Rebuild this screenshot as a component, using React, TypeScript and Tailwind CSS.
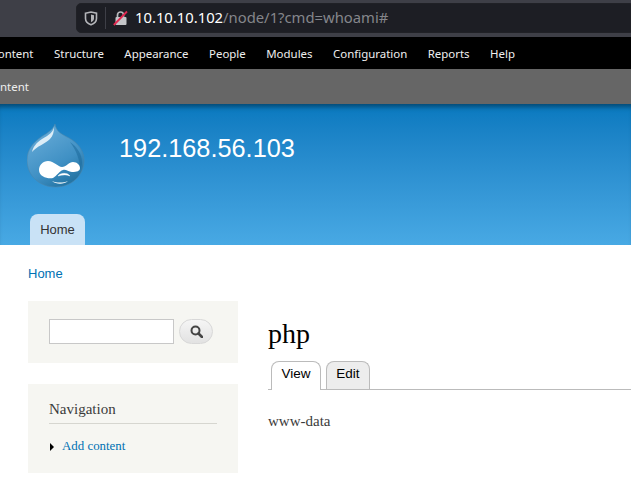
const navItems = ["Content", "Structure", "Appearance", "People", "Modules", "Configuration", "Reports", "Help"]

function ShieldIcon() {
  return (
    <svg width="14" height="15" viewBox="0 0 14 15" fill="none">
      <path d="M1.5 2.2 7 1l5.5 1.2v5.2c0 3-2.4 5.2-5.5 6.4C3.9 12.6 1.5 10.4 1.5 7.4z" stroke="#b4b5b9" strokeWidth="1.6" />
      <path d="M7 3.5 10 4.2v3.2c0 1.7-1.3 3-3 3.8z" fill="#b4b5b9" />
    </svg>
  )
}

function LockIcon() {
  return (
    <svg width="15" height="16" viewBox="0 0 15 16" fill="none">
      <path d="M4.5 7V5a3 3 0 0 1 6 0v2" stroke="#b8b9bd" strokeWidth="1.7" />
      <rect x="2.5" y="7" width="11" height="8" rx="1" fill="#c4c5c8" />
      <path d="M0.8 15 14 1.5" stroke="#e22850" strokeWidth="1.8" />
    </svg>
  )
}

function DrupalLogo() {
  return (
    <svg width="58" height="64" viewBox="0 0 58 64">
      <defs>
        <linearGradient id="drop" x1="0.25" y1="0.1" x2="0.75" y2="1">
          <stop offset="0" stopColor="#64a9d6" />
          <stop offset="0.6" stopColor="#3f90c4" />
          <stop offset="1" stopColor="#1f709f" />
        </linearGradient>
      </defs>
      {/* drop */}
      <path d="M28 0C29 7 34 10 42 14C51 19 57 27 57 36C57 52 44 63 28.5 63C13 63 0 52 0 36C0 25 7 18 14 13C20 9 26 6 28 0Z" fill="url(#drop)" stroke="#4a86ad" strokeWidth="0.6" />
      {/* highlight */}
      <path d="M27 3C26 8 22 11 15 15C9 19 6 23 5 28C10 22 18 20 23 15C26 12 27 8 27 3Z" fill="#dcedf7" />
      {/* right shade */}
      <path d="M43 18C50 23 55 30 55 38C55 41 54 44 53 46C53 35 49 26 43 18Z" fill="#1c6a9a" opacity="0.55" />
      {/* mask */}
      <path d="M12 46C12 41 16 37 21 37C27 37 31 43 35 43C39 43 42 38 46 38C50 38 53 41 53 44C53 47 50 48 45 48C41 48 39 45 36 46C32 47 30 52 26 54C21 55 12 53 12 46Z" fill="#fff" />
      {/* smile */}
      <path d="M31 52C33 49 40 48 43 52C40 50.500 35 50.500 31 52Z" fill="#fff" stroke="#fff" strokeWidth="0.4" />
      <path d="M25 57C30 59 36 59 41 57C37 60.500 29 60.500 25 57Z" fill="#fff" />
    </svg>
  )
}

export default function App() {
  return (
    <div className="h-[484px] w-[631px] overflow-hidden bg-white font-['Liberation_Sans',sans-serif]">
      {/* Browser bar */}
      <div className="flex h-[37px] items-start bg-[#3e3f47] pl-[76px] pt-[3px]">
        <div className="flex h-[30px] flex-1 items-center rounded-l-[5px] border border-[#202126] bg-[#1d1e24] font-['Noto_Sans',sans-serif] text-[14.8px]">
          <div className="ml-[7px] flex w-[20px] items-center"><ShieldIcon /></div>
          <div className="ml-px h-[22px] w-px bg-[#3e3f47]" />
          <div className="ml-[7px]"><LockIcon /></div>
          <span className="ml-[7px] -mt-[1px] text-white">10.10.10.102</span>
          <span className="-mt-[1px] text-[#85868b]">/node/1?cmd=whoami#</span>
        </div>
      </div>

      {/* Admin toolbar */}
      <div className="flex h-[32px] items-center bg-black pt-[2px] font-['Noto_Sans',sans-serif] text-[11.45px] text-[#eeeeee]">
        <div className="-ml-[9.5px] flex items-center gap-[20.5px]">
          {navItems.map((item) => (
            <span key={item}>{item}</span>
          ))}
        </div>
      </div>
      <div className="flex h-[35px] items-center bg-[#666666] font-['Noto_Sans',sans-serif] text-[11.5px] text-[#eeeeee]">
        <span className="-ml-[37px]">Add content</span>
      </div>

      {/* Site header */}
      <header className="flex h-[141px] flex-col justify-between bg-gradient-to-b from-[#0779bf] to-[#48a9e4] pl-[27px] shadow-[inset_0_6px_5px_-3px_rgba(0,0,0,0.4)]">
        <div className="flex items-start pt-[20px]">
          <DrupalLogo />
          <h2 className="ml-[34px] mt-[8px] text-[25.3px] leading-[32px] text-white">192.168.56.103</h2>
        </div>
        <div className="ml-[3px] flex h-[31px] w-[55px] items-center justify-center rounded-t-[8px] bg-[#c9e2f6] text-[13px] text-[#333333]">
          Home
        </div>
      </header>

      {/* Breadcrumb */}
      <div className="pl-[28px] pt-[21px] text-[13px] leading-[15px] text-[#0071b3]">Home</div>

      {/* Content */}
      <div className="mt-[20px] flex font-['Liberation_Serif',serif]">
        <aside className="ml-[28px] flex w-[210px] flex-col gap-[21px]">
          <div className="flex h-[62px] items-start gap-[5px] bg-[#f6f6f2] pl-[21px] pt-[18px]">
            <div className="h-[25px] w-[125px] border border-[#c8c8c8] bg-white" />
            <div className="flex h-[25px] w-[34px] items-center justify-center rounded-full border border-[#d8d8d8] bg-gradient-to-b from-[#f5f5f5] to-[#e2e2e2]">
              <svg width="13" height="13" viewBox="0 0 13 13" fill="none">
                <circle cx="5.5" cy="5.5" r="4" stroke="#444" strokeWidth="2" />
                <path d="M8.5 8.5 12 12" stroke="#444" strokeWidth="2.6" strokeLinecap="round" />
              </svg>
            </div>
          </div>
          <div className="h-[89px] bg-[#f6f6f2] px-[21px] pt-[16px]">
            <div className="border-b border-[#d6d6d0] pb-[5px] text-[15px] leading-[18px] text-[#3b3b3b]">Navigation</div>
            <div className="mt-[15px] flex items-center text-[12.9px] leading-[15px] text-[#0071b3]">
              <svg width="13" height="8" viewBox="0 0 13 8" className="shrink-0">
                <path d="M1 0 5 4 1 8z" fill="#000" />
              </svg>
              Add content
            </div>
          </div>
        </aside>

        <main className="ml-[30px] flex-1">
          <h1 className="mt-[15px] pb-[9px] text-[28px] leading-[36px] text-black">php</h1>
          <div className="flex gap-[5px] border-b border-[#bbbbbb] pl-[3px] font-['Liberation_Sans',sans-serif] text-[13.5px] text-black">
            <div className="-mb-px flex h-[29px] w-[50px] items-center justify-center rounded-t-[8px] border border-b-0 border-[#bbbbbb] bg-white pb-[3px]">View</div>
            <div className="flex h-[28px] w-[44px] items-center justify-center rounded-t-[8px] border border-b-0 border-[#bbbbbb] bg-[#ededed] pb-[3px]">Edit</div>
          </div>
          <p className="mt-[23px] text-[15px] leading-[16px] text-[#3b3b3b]">www-data</p>
        </main>
      </div>
    </div>
  )
}
